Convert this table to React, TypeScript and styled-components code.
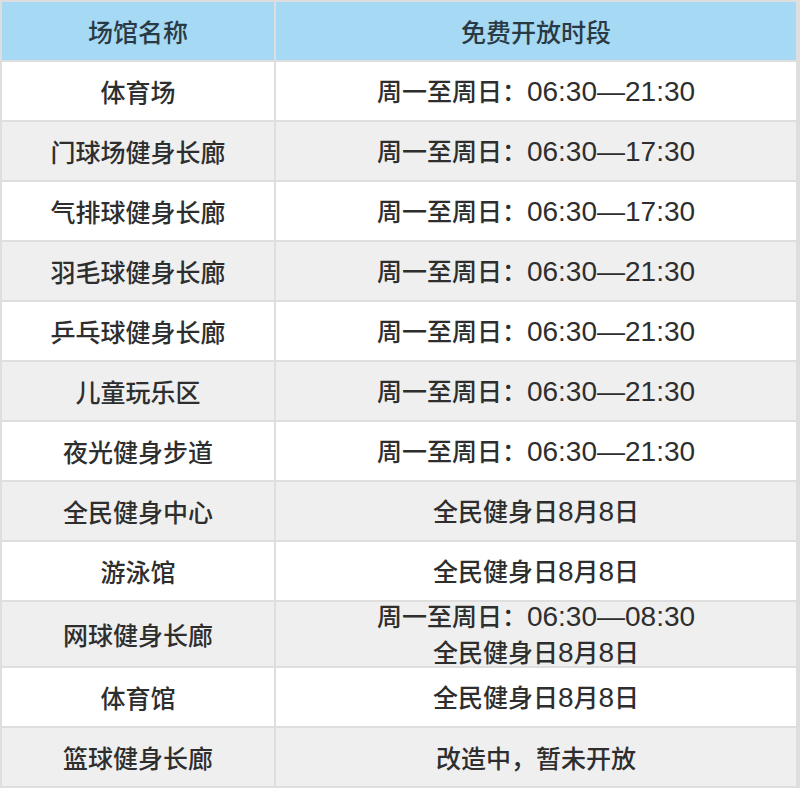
import React from 'react';
import styled, { createGlobalStyle } from 'styled-components';

const GlobalStyle = createGlobalStyle`
  html, body {
    margin: 0;
    padding: 0;
    background: #ffffff;
  }
  body {
    font-family: "Noto Sans CJK SC", "Noto Sans", sans-serif;
    color: #2e2e2e;
  }
`;

const Table = styled.div`
  display: grid;
  grid-template-columns: 272px 520px;
  gap: 2px;
  padding: 2px;
  width: 796px;
  background: #dedede;
`;

const Cell = styled.div<{ $bg: string; $tall?: boolean }>`
  display: flex;
  flex-direction: column;
  align-items: center;
  justify-content: center;
  height: ${(p) => (p.$tall ? '64px' : '58px')};
  background: ${(p) => p.$bg};
  font-size: 25px;
  font-weight: 500;
  line-height: 34px;
  text-align: center;
`;

const HeaderCell = styled(Cell)`
  color: #2a3a44;
`;

const Line = styled.span`
  white-space: nowrap;
`;

// digits and dashes in the source are set in a Helvetica-like face, a bit larger
const Latin = styled.span`
  font-family: "Liberation Sans", Arial, sans-serif;
  font-size: 28px;
  font-weight: 400;
`;

const splitRuns = (text: string) => text.split(/([0-9:—]+)/).filter(Boolean);

const Mixed = ({ text }: { text: string }) => (
  <Line>
    {splitRuns(text).map((part, i) =>
      /[0-9:—]/.test(part) ? <Latin key={i}>{part}</Latin> : <React.Fragment key={i}>{part}</React.Fragment>
    )}
  </Line>
);

type Row = { name: string; times: string[] };

const rows: Row[] = [
  { name: '体育场', times: ['周一至周日：06:30—21:30'] },
  { name: '门球场健身长廊', times: ['周一至周日：06:30—17:30'] },
  { name: '气排球健身长廊', times: ['周一至周日：06:30—17:30'] },
  { name: '羽毛球健身长廊', times: ['周一至周日：06:30—21:30'] },
  { name: '乒乓球健身长廊', times: ['周一至周日：06:30—21:30'] },
  { name: '儿童玩乐区', times: ['周一至周日：06:30—21:30'] },
  { name: '夜光健身步道', times: ['周一至周日：06:30—21:30'] },
  { name: '全民健身中心', times: ['全民健身日8月8日'] },
  { name: '游泳馆', times: ['全民健身日8月8日'] },
  { name: '网球健身长廊', times: ['周一至周日：06:30—08:30', '全民健身日8月8日'] },
  { name: '体育馆', times: ['全民健身日8月8日'] },
  { name: '篮球健身长廊', times: ['改造中，暂未开放'] },
];

export default function App() {
  return (
    <>
      <GlobalStyle />
      <Table>
        <HeaderCell $bg="#a6d9f4">场馆名称</HeaderCell>
        <HeaderCell $bg="#a6d9f4">免费开放时段</HeaderCell>
        {rows.map((row, i) => {
          const bg = i % 2 === 0 ? '#ffffff' : '#efefef';
          const tall = row.times.length > 1;
          return (
            <React.Fragment key={row.name + i}>
              <Cell $bg={bg} $tall={tall}>{row.name}</Cell>
              <Cell $bg={bg} $tall={tall}>
                {row.times.map((t) => (
                  <Mixed key={t} text={t} />
                ))}
              </Cell>
            </React.Fragment>
          );
        })}
      </Table>
    </>
  );
}
